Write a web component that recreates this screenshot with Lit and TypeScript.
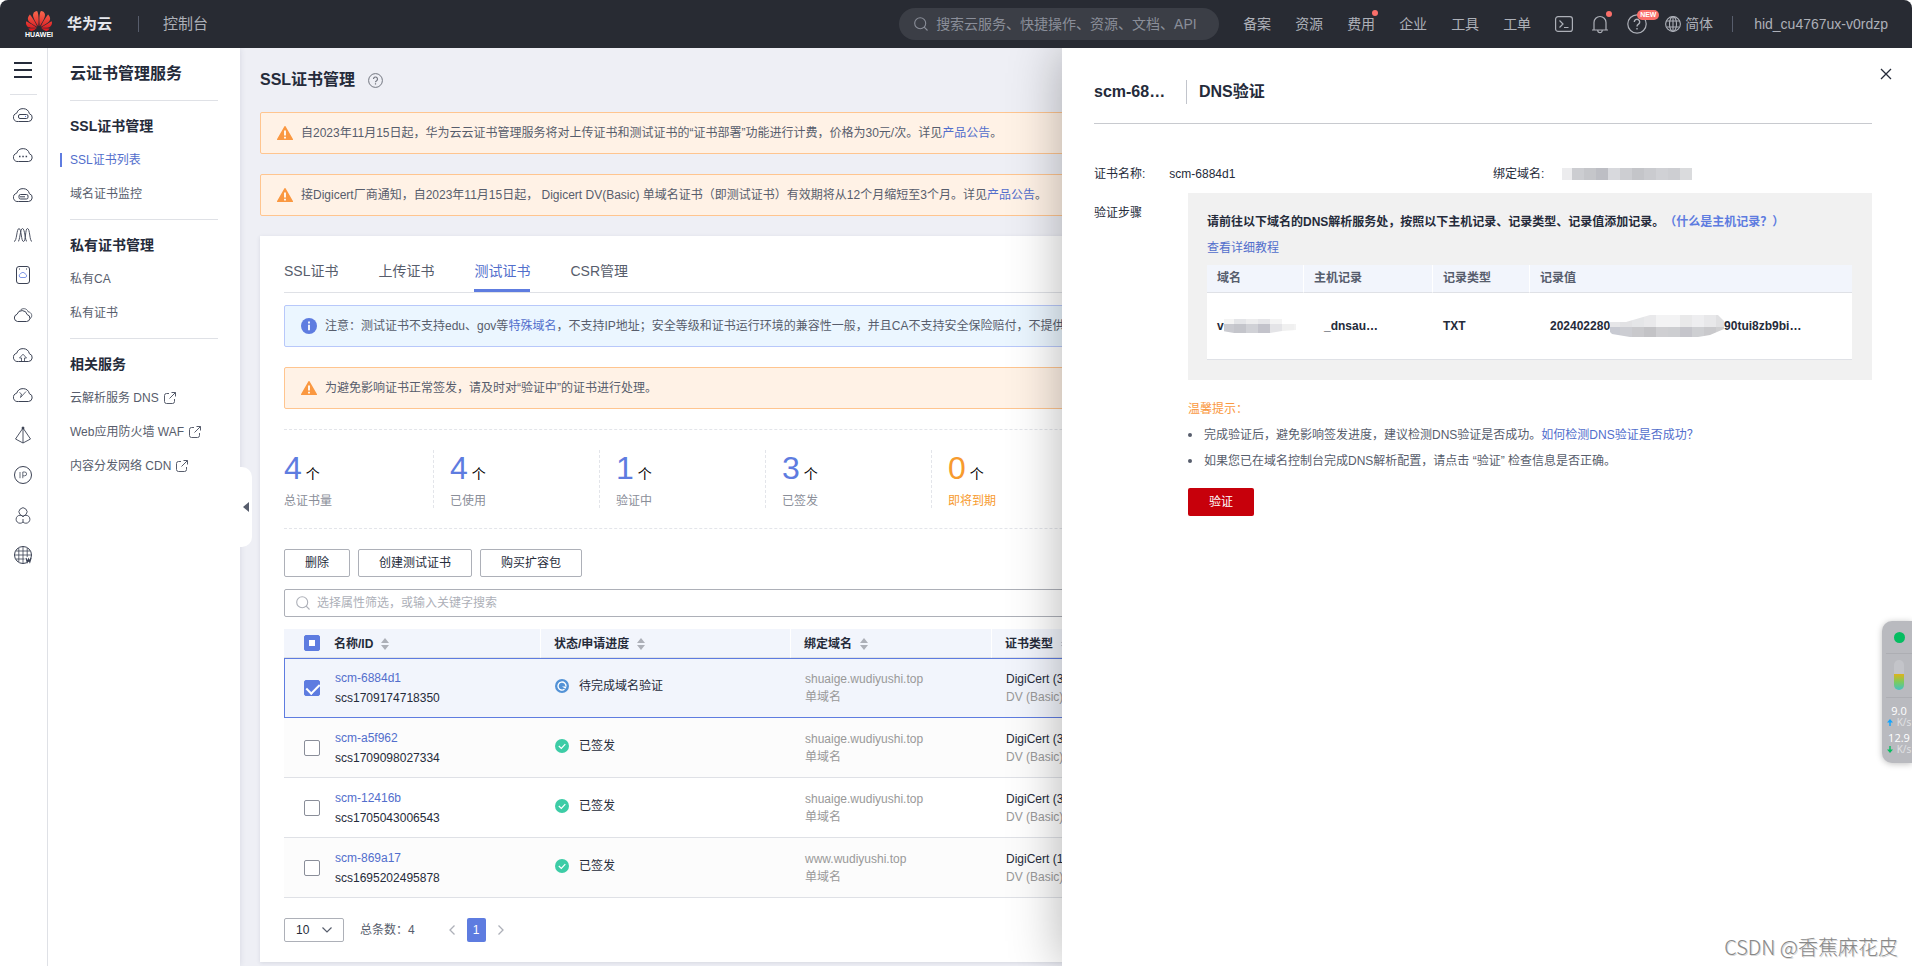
import { LitElement, html, css, svg, TemplateResult, SVGTemplateResult } from "lit";
import { customElement, property, state } from "lit/decorators.js";
import { classMap } from "lit/directives/class-map.js";

const baseStyles = css`
  * { box-sizing: border-box; }
  :host {
    font-family: "Liberation Sans", "Noto Sans CJK SC", sans-serif;
    font-size: 12px;
    line-height: 20px;
    color: #252b3a;
    text-spacing-trim: space-all;
  }
  button, input, select { font: inherit; color: inherit; }
  button { cursor: pointer; margin: 0; }
  a { color: #526ecc; text-decoration: none; }
  svg { display: block; flex: none; }
  h1, h2, h3, p, ul { margin: 0; padding: 0; }
`;

const searchIcon = html`<svg width="14" height="14" viewBox="0 0 14 14" fill="none" stroke="currentColor" stroke-width="1.1">
  <circle cx="6.2" cy="6.2" r="5.5" /><path d="M10.2 10.2 13.5 13.5" />
</svg>`;

const externalIcon = html`<svg width="12" height="12" viewBox="0 0 12 12" fill="none" stroke="#575d6c">
  <path d="M5 1.5H2.5a2 2 0 0 0-2 2v6a2 2 0 0 0 2 2h6a2 2 0 0 0 2-2V7M7.5.5h4v4M11.5.5 5.5 6.5" />
</svg>`;

const cloud = "M5.5 16.5h10a4 4 0 0 0 .9-7.8A6.6 6.6 0 0 0 3.700 8.200a4.200 4.200 0 0 0 1.800 8.300z";

const railIcons: SVGTemplateResult[] = [
  svg`<path d=${cloud} /><rect x="5.500" y="9.500" width="9.500" height="4" rx="1.500" /><path d="M12 11.500h1" stroke="#5e7ce0" />`,
  svg`<path d=${cloud} /><path d="M6 11.500h1.500M9.300 11.500h1.500M12.600 11.500h1.500" stroke-width="1.500" />`,
  svg`<path d=${cloud} /><rect x="6" y="9.500" width="9" height="4.500" rx="1.500" /><path d="M7 11.800h5" />`,
  svg`<path d="M1 16.500C4 16.500 3.500 3.500 6 3.500s2 13 4.500 13S12 3.500 14.500 3.500 16.500 16.500 19 16.500M5 16.500c2 0 2-13 4.500-13s2.500 13 4.500 13" stroke-width=".9" />`,
  svg`<rect x="3.500" y="1.500" width="13" height="17" rx="2.500" /><path d="M8 12.500h4.200a1.700 1.700 0 0 0 .2-3.300 2.700 2.700 0 0 0-5-.2A1.800 1.800 0 0 0 8 12.500z" stroke="#5e7ce0" stroke-width=".8" /><path d="M6 4h1M13 4h1" />`,
  svg`<path d="M4.500 16.500h9a3.500 3.500 0 0 0 .7-6.900A5.300 5.300 0 0 0 4 9.300a3.700 3.700 0 0 0 .5 7.200z" /><path d="M7 5.500c2-2.700 7-2.500 8 1.200 4 .6 5 5 2 7" stroke-width=".8" />`,
  svg`<path d=${cloud} /><path d="M8.500 16.300v-3.300H6.500L10 9.200l3.500 3.800h-2v3.300" stroke-width=".8" />`,
  svg`<path d=${cloud} /><path d="m6.500 7.500 2 1.500-1 3.500L13 6.500" stroke-width=".8" />`,
  svg`<path d="M10 3 2.500 14 10 18l7.500-4L10 3v15" stroke-width=".9" /><circle cx="10" cy="3" r="1" fill="#252b3a" />`,
  svg`<circle cx="10" cy="10" r="8.500" /><path d="M7 7v6.200M9.800 13.200V7h1.900a1.900 1.900 0 0 1 0 3.800H9.800" stroke="#575d6c" stroke-width=".9" />`,
  svg`<path d="M7 9.500a4 4 0 1 1 6 0M10 11.500a4 4 0 1 0 0 5.500 4 4 0 1 0 0-5.500zM7 9.500l3 2 3-2M10 14v3" stroke-width=".9" />`,
  svg`<circle cx="10" cy="10" r="8.500" /><path d="M10 1.500v17M5.800 3v14M14.200 3v9M2.500 6h15M1.500 10h17M2.500 14h9" stroke-width=".8" /><path d="m13 13 1.200 4 1.300-3 1.300 3L18 13" stroke-width="1.200" />`,
];

@customElement("top-bar")
class TopBar extends LitElement {
  static styles = [baseStyles, css`
    :host { display: block; position: relative; z-index: 3; background: #fff; }
    .bar {
      height: 48px; display: flex; align-items: center; padding: 0 24px 0 26px;
      background: #282b33; color: #adb0b8; border-radius: 8px 8px 0 0; font-size: 14px;
    }
    .logo { display: flex; flex-direction: column; align-items: center; width: 26px; color: #fff; }
    .logo-name { font-size: 7px; line-height: 8px; font-weight: 700; }
    .brand { margin-left: 15px; font-size: 15px; font-weight: 700; color: #e6e8ee; }
    .sep { width: 1px; height: 16px; background: #575d6c; flex: none; }
    .brand + .sep { margin: 0 24px 0 26px; }
    .console { font-size: 15px; color: inherit; }
    .search {
      margin-left: auto; width: 320px; height: 32px; border-radius: 16px; background: #3b3e46;
      display: flex; align-items: center; gap: 8px; padding: 0 14px 0 15px; color: #8a8e99;
    }
    .search input { flex: 1; min-width: 0; border: 0; outline: 0; background: none; padding: 0; }
    .search input::placeholder { color: #8a8e99; opacity: 1; }
    nav { display: flex; gap: 24px; margin: 0 24px; }
    .link { position: relative; color: #adb0b8; }
    .dot { position: absolute; top: -4px; right: -3px; width: 6px; height: 6px; border-radius: 3px; background: #fa6f6a; }
    .tools { display: flex; align-items: center; gap: 18px; }
    .tool { position: relative; display: block; border: 0; background: none; padding: 0; color: inherit; }
    .tool .dot { top: -3px; }
    .new {
      position: absolute; left: 10px; top: -4px; height: 10px; padding: 0 3px; border-radius: 5px;
      background: #fa6f6a; color: #fff; font-size: 7px; line-height: 10px; font-weight: 700;
    }
    .lang { display: flex; align-items: center; gap: 4px; border: 0; background: none; padding: 0; }
    .lang + .sep { margin: 0 21px 0 1px; }
    .user { color: inherit; }
  `];

  render() {
    const links = ["备案", "资源", "费用", "企业", "工具", "工单"];
    return html`<header class="bar">
      <div class="logo">
        <svg width="26" height="21" viewBox="0 2 24 19" preserveAspectRatio="none">
          <defs><linearGradient id="petal" x1="0" y1="0" x2="0" y2="1"><stop offset="0" stop-color="#f8684e" /><stop offset="1" stop-color="#d8121c" /></linearGradient></defs>
          <path fill="url(#petal)" d="M3.67 6.14S1.82 7.91 1.72 9.78v.35c.08 1.51 1.22 2.4 1.22 2.4 1.83 1.79 6.26 4.04 7.3 4.55 0 0 .06.03.1-.01l.02-.04v-.04C7.52 10.8 3.67 6.14 3.67 6.14zM9.65 18.6c-.02-.08-.1-.08-.1-.08l-7.38.26c.8 1.43 2.15 2.53 3.56 2.2.96-.25 3.16-1.78 3.88-2.3.06-.05.04-.09.04-.09zm.08-.78C6.49 15.63.21 12.28.21 12.28c-.15.46-.2.9-.21 1.3v.07c0 1.070.4 1.820.4 1.820.8 1.690 2.340 2.200 2.340 2.200.7.3 1.400.31 1.400.31.12.02 4.400 0 5.540 0 .05 0 .08-.05.08-.05v-.06c0-.03-.03-.05-.03-.05zM9.060 3.190a3.420 3.420 0 0 0-2.570 3.150v.41c.03.6.16 1.050.16 1.050.66 2.900 3.860 7.650 4.550 8.650.05.05.1.03.1.03a.1.1 0 0 0 .06-.1c1.060-10.600-1.110-13.420-1.110-13.420-.32.02-1.190.23-1.190.23zm8.299 2.270s-.49-1.800-2.440-2.280c0 0-.57-.14-1.170-.22 0 0-2.180 2.810-1.120 13.430.01.07.06.08.06.08.07.03.1-.03.1-.03.72-1.030 3.900-5.760 4.550-8.640 0 0 .36-1.400.02-2.340zm-2.920 13.070s-.07 0-.09.05c0 0-.01.07.03.1.7.51 2.850 2 3.880 2.300 0 0 .16.05.43.06h.14c.69-.02 1.900-.37 3-2.260l-7.400-.25zm7.830-8.410c.14-2.060-1.940-3.970-1.940-3.980 0 0-3.850 4.660-6.670 10.800 0 0-.03.08.02.13l.04.01h.06c1.060-.53 5.460-2.770 7.280-4.540 0 0 1.150-.93 1.210-2.420zm1.520 2.140s-6.280 3.370-9.520 5.550c0 0-.05.04-.03.11 0 0 .03.06.07.06 1.160 0 5.560 0 5.670-.02 0 0 .57-.02 1.270-.29 0 0 1.560-.5 2.370-2.270 0 0 .73-1.450.17-3.140z" />
        </svg>
        <span class="logo-name">HUAWEI</span>
      </div>
      <span class="brand">华为云</span><span class="sep"></span>
      <a class="console" href="#">控制台</a>
      <label class="search">${searchIcon}<input type="text" aria-label="搜索" placeholder="搜索云服务、快捷操作、资源、文档、API" /></label>
      <nav>${links.map(l => html`<a class="link" href="#">${l}${l === "费用" ? html`<i class="dot"></i>` : ""}</a>`)}</nav>
      <div class="tools">
        <button class="tool" aria-label="CloudShell">
          <svg width="18" height="16" viewBox="0 0 18 16" fill="none" stroke="currentColor" stroke-width="1.2"><rect x=".6" y=".6" width="16.800" height="14.800" rx="2.500" /><path d="m4.500 4.500 3.500 3.500-3.500 3.500M9 11.500h4.500" /></svg>
        </button>
        <button class="tool" aria-label="通知">
          <svg width="18" height="20" viewBox="0 0 18 20" fill="none" stroke="currentColor" stroke-width="1.200"><path d="M1 16h16M3 16V8.500a6 6 0 0 1 12 0V16M6.800 16.500a2.200 2.200 0 0 0 4.400 0" /></svg>
          <i class="dot"></i>
        </button>
        <button class="tool" aria-label="帮助">
          <svg width="20" height="20" viewBox="0 0 20 20" fill="none" stroke="currentColor" stroke-width="1.200"><circle cx="10" cy="10" r="9.200" /><path d="M7.300 8a2.700 2.700 0 1 1 4.200 2.200c-1 .7-1.500 1.200-1.500 2.300M10 14v1.500" stroke-width="1.400" /></svg>
          <span class="new">NEW</span>
        </button>
        <button class="lang">
          <svg width="16" height="16" viewBox="0 0 16 16" fill="none" stroke="currentColor" stroke-width="1.100"><circle cx="8" cy="8" r="7.400" /><ellipse cx="8" cy="8" rx="3.500" ry="7.400" /><path d="M8 .6v14.800M1.500 5h13M1.500 11h13" /></svg>
          简体
        </button>
        <span class="sep"></span>
      </div>
      <a class="user" href="#">hid_cu4767ux-v0rdzp</a>
    </header>`;
  }
}

@customElement("side-nav")
class SideNav extends LitElement {
  static styles = [baseStyles, css`
    :host { display: flex; flex: none; position: relative; z-index: 1; background: #fff; box-shadow: 0 0 6px rgba(40, 50, 80, .12); }
    .rail { width: 48px; border-right: 1px solid #dfe1e6; display: flex; flex-direction: column; align-items: center; padding: 14px 1px 0 0; }
    .rail button { border: 0; background: none; padding: 0; }
    .menu-line { width: 27px; height: 1px; background: #dfe1e6; margin: 16px 0 0; }
    .rail .rail-item { height: 40px; display: flex; align-items: center; }
    .menu { width: 192px; padding: 16px 22px 0; }
    h2 { font-size: 16px; line-height: 20px; padding-bottom: 16px; color: #252b3a; }
    h3 { font-size: 14px; line-height: 20px; margin-bottom: 7px; }
    .group { border-top: 1px solid #dfe1e6; padding: 15px 0 8px; }
    .item { display: flex; align-items: center; gap: 5px; height: 34px; color: #575d6c; white-space: nowrap; }
    .active { color: #526ecc; margin-left: -10px; }
    .active::before { content: ""; width: 2px; height: 14px; background: #5e7ce0; margin-right: 3px; }
    .fold {
      position: absolute; left: 100%; top: 419px; width: 12px; height: 80px; border: 0; padding: 0 0 0 3px;
      background: #fff; border-radius: 0 10px 10px 0;
    }
  `];

  private groups = [
    { title: "SSL证书管理", items: ["SSL证书列表", "域名证书监控"], external: false },
    { title: "私有证书管理", items: ["私有CA", "私有证书"], external: false },
    { title: "相关服务", items: ["云解析服务 DNS", "Web应用防火墙 WAF", "内容分发网络 CDN"], external: true },
  ];

  render() {
    return html`
      <div class="rail">
        <button aria-label="服务列表"><svg width="18" height="16" viewBox="0 0 18 16" stroke="#252b3a" stroke-width="2"><path d="M0 1h18M0 8h18M0 15h18" /></svg></button>
        <span class="menu-line"></span>
        ${railIcons.map((icon, i) => html`<button class="rail-item" aria-label="快捷服务 ${i + 1}">
          <svg width="20" height="20" viewBox="0 0 20 20" fill="none" stroke="#3b4254" stroke-width="1">${icon}</svg>
        </button>`)}
      </div>
      <nav class="menu">
        <h2>云证书管理服务</h2>
        ${this.groups.map(g => html`<section class="group"><h3>${g.title}</h3>
          ${g.items.map(t => html`<a href="#" class=${classMap({ item: true, active: t === "SSL证书列表" })}>${t}${g.external ? externalIcon : ""}</a>`)}
        </section>`)}
      </nav>
      <button class="fold" aria-label="收起"><svg width="6" height="10" viewBox="0 0 6 10"><path d="M6 0v10L0 5z" fill="#575d6c" /></svg></button>
    `;
  }
}

@customElement("notice-bar")
class NoticeBar extends LitElement {
  @property() kind: "warn" | "info" = "warn";
  static styles = [baseStyles, css`
    :host { display: block; }
    .bar { display: flex; align-items: center; gap: 8px; height: 42px; padding: 0 16px; border: 1px solid #ffc58f; border-radius: 2px; background: #fff2e6; color: #575d6c; white-space: nowrap; overflow: hidden; }
    .info { border-color: #b8c8fa; background: #ebf6ff; }
  `];
  render() {
    const warn = html`<svg width="16" height="14" viewBox="0 0 16 14"><path d="M7.300.4a.8.8 0 0 1 1.400 0L15.900 13a.7.7 0 0 1-.6 1H.7a.7.7 0 0 1-.6-1z" fill="#fa9841" /><path d="M8 4.500v5M8 10.800v1.700" stroke="#fff" stroke-width="1.800" /></svg>`;
    const info = html`<svg width="16" height="16" viewBox="0 0 16 16"><circle cx="8" cy="8" r="8" fill="#5e7ce0" /><path d="M8 3.500v2M8 6.700v5.600" stroke="#fff" stroke-width="1.800" /></svg>`;
    return html`<div class=${classMap({ bar: true, info: this.kind === "info" })} role="status">
      ${this.kind === "info" ? info : warn}<span><slot></slot></span></div>`;
  }
}

interface Cert { name: string; id: string; pending: boolean; domain: string; type: string; }

@customElement("cert-list")
class CertList extends LitElement {
  static styles = [baseStyles, css`
    :host { display: block; background: #fff; padding: 25px 24px 20px; box-shadow: 0 1px 4px rgba(40, 50, 80, .12); }
    .tabs { display: flex; gap: 40px; border-bottom: 1px solid #dfe1e6; margin-bottom: 12px; }
    .tab { height: 31px; padding: 0 0 8px; border: 0; border-bottom: 3px solid transparent; background: none; color: #575d6c; font-size: 14px; line-height: 20px; }
    .tab.on { color: #526ecc; border-color: #5e7ce0; }
    notice-bar + notice-bar { margin-top: 20px; }
    .stats { display: flex; margin: 20px 0; height: 100px; padding: 20px 0; border: dashed #e3e5ea; border-width: 1px 0; }
    .stat { width: 150px; margin-right: 16px; border-right: 1px dashed #e3e5ea; color: #8a8e99; }
    .stat:last-child { border: 0; }
    .count { display: flex; align-items: baseline; gap: 4px; height: 41px; line-height: 36px; font-size: 32px; color: #5e7ce0; }
    .unit { font-size: 14px; color: #000; }
    .soon, .soon .count { color: #f79b2e; }
    .soon .unit { color: #000; }
    .actions { display: flex; gap: 8px; margin-bottom: 12px; }
    .action { height: 28px; padding: 0 20px; border: 1px solid #adb0b8; border-radius: 2px; background: #fff; line-height: 20px; }
    .filter { display: flex; align-items: center; gap: 7px; height: 28px; padding: 0 11px; border: 1px solid #adb0b8; border-radius: 2px; color: #adb0b8; margin-bottom: 12px; }
    .filter input { flex: 1; border: 0; outline: 0; padding: 0; background: none; }
    .filter input::placeholder { color: #adb0b8; opacity: 1; }
    table { width: 100%; table-layout: fixed; border-spacing: 0; }
    th { height: 29px; padding: 1px 0 0 13px; text-align: left; background: #f2f5fc; border-bottom: 1px solid #dfe1e6; border-right: 1px solid #fff; font-weight: 700; line-height: 20px; }
    td { height: 60px; padding: 0 0 0 14px; border-bottom: 1px solid #dfe1e6; line-height: 18px; white-space: nowrap; overflow: hidden; }
    th:first-child { padding: 0 0 0 20px; border-right: 0; }
    td:first-child { padding: 0 0 0 20px; }
    th:nth-child(2) { padding-left: 0; }
    td:nth-child(2) { padding-left: 1px; line-height: 20px; }
    .pick { width: 50px; }
    .name { width: 207px; }
    .state { width: 250px; }
    .domain { width: 201px; }
    .head { display: flex; align-items: center; gap: 8px; }
    .even td { background: #fcfcfc; }
    .on td { background: #f2f5fc; border-top: 1px solid #5e7ce0; border-bottom-color: #5e7ce0; }
    .on td:first-child { border-left: 1px solid #5e7ce0; padding-left: 19px; }
    .box { appearance: none; display: block; width: 16px; height: 16px; margin: 0; border: 1px solid #8a8e99; border-radius: 2px; background: #fff; position: relative; }
    .box:checked, .box:indeterminate { background: #5e7ce0; border-color: #5e7ce0; }
    .box:indeterminate::after { content: ""; position: absolute; inset: 4px; background: #fff; }
    .box:checked:not(:indeterminate)::after { content: ""; position: absolute; left: 4px; top: 0; width: 6px; height: 11px; border: solid #fff; border-width: 0 2px 2px 0; transform: rotate(45deg); }
    .status { display: flex; align-items: center; gap: 10px; padding-bottom: 4px; }
    .muted { color: #999; }
    .pager { display: flex; align-items: center; margin-top: 20px; color: #575d6c; }
    .size { position: relative; display: block; margin-right: 16px; color: #252b3a; }
    .size select { appearance: none; width: 60px; height: 24px; padding: 0 0 0 11px; border: 1px solid #adb0b8; border-radius: 2px; background: #fff; }
    .size svg { position: absolute; right: 12px; top: 9px; pointer-events: none; }
    .step { border: 0; background: none; padding: 0; width: 30px; display: flex; justify-content: center; }
    .total { margin-right: 22px; }
    .page { width: 19px; height: 24px; border: 0; border-radius: 2px; padding: 0; background: #5e7ce0; color: #fff; }
  `];

  @state() private selected = new Set(["scm-6884d1"]);

  private certs: Cert[] = [
    { name: "scm-6884d1", id: "scs1709174718350", pending: true, domain: "shuaige.wudiyushi.top", type: "DigiCert (3个月)" },
    { name: "scm-a5f962", id: "scs1709098027334", pending: false, domain: "shuaige.wudiyushi.top", type: "DigiCert (3个月)" },
    { name: "scm-12416b", id: "scs1705043006543", pending: false, domain: "shuaige.wudiyushi.top", type: "DigiCert (3个月)" },
    { name: "scm-869a17", id: "scs1695202495878", pending: false, domain: "www.wudiyushi.top", type: "DigiCert (1年)" },
  ];

  private toggle(name: string) {
    const next = new Set(this.selected);
    next.has(name) ? next.delete(name) : next.add(name);
    this.selected = next;
  }

  private column(name: string): TemplateResult {
    return html`<div class="head">${name}<svg width="8" height="12" viewBox="0 0 8 12" fill="#adb0b8"><path d="M4 0l4 5H0zM4 12l4-5H0z" /></svg></div>`;
  }

  private stateIcon(pending: boolean): TemplateResult {
    return pending
      ? html`<svg width="14" height="14" viewBox="0 0 14 14" fill="none" stroke="#fff" stroke-width="1.400"><circle cx="7" cy="7" r="7" fill="#5392d6" stroke="none" /><path d="M9.500 10.200A4 4 0 1 1 11 7.300" /><path d="M7 7.400h4.600L10.500 9.800z" fill="#fff" stroke="none" /></svg>`
      : html`<svg width="14" height="14" viewBox="0 0 14 14" fill="none" stroke="#fff" stroke-width="1.200"><circle cx="7" cy="7" r="7" fill="#3dcca6" stroke="none" /><path d="m3.800 7 2.500 2.400 4-4.300" /></svg>`;
  }

  render() {
    const stats = [["4", "总证书量"], ["4", "已使用"], ["1", "验证中"], ["3", "已签发"], ["0", "即将到期"]];
    const some = this.selected.size > 0 && this.selected.size < this.certs.length;
    return html`
      <div class="tabs" role="tablist">
        ${["SSL证书", "上传证书", "测试证书", "CSR管理"].map(t => html`<button role="tab" class=${classMap({ tab: true, on: t === "测试证书" })}>${t}</button>`)}
      </div>
      <notice-bar kind="info">注意：测试证书不支持edu、gov等<a href="#">特殊域名</a>，不支持IP地址；安全等级和证书运行环境的兼容性一般，并且CA不支持安全保险赔付，不提供</notice-bar>
      <notice-bar>为避免影响证书正常签发，请及时对“验证中”的证书进行处理。</notice-bar>
      <div class="stats">
        ${stats.map(([n, label]) => html`<div class=${classMap({ stat: true, soon: label === "即将到期" })}>
          <div class="count">${n}<span class="unit">个</span></div>${label}</div>`)}
      </div>
      <div class="actions">${["删除", "创建测试证书", "购买扩容包"].map(t => html`<button class="action">${t}</button>`)}</div>
      <label class="filter">${searchIcon}<input aria-label="筛选" placeholder="选择属性筛选，或输入关键字搜索" /></label>
      <table>
        <thead><tr>
          <th class="pick"><input class="box" type="checkbox" aria-label="全选" .indeterminate=${some} /></th>
          <th class="name">${this.column("名称/ID")}</th>
          <th class="state">${this.column("状态/申请进度")}</th>
          <th class="domain">${this.column("绑定域名")}</th>
          <th>${this.column("证书类型")}</th>
        </tr></thead>
        <tbody>${this.certs.map((c, i) => html`<tr class=${classMap({ on: this.selected.has(c.name), even: i % 2 === 1 })}>
          <td><input class="box" type="checkbox" aria-label=${c.name} .checked=${this.selected.has(c.name)} @change=${() => this.toggle(c.name)} /></td>
          <td><a href="#">${c.name}</a><br />${c.id}</td>
          <td><div class="status">${this.stateIcon(c.pending)}${c.pending ? "待完成域名验证" : "已签发"}</div></td>
          <td class="muted">${c.domain}<br />单域名</td>
          <td>${c.type}<br /><span class="muted">DV (Basic)</span></td>
        </tr>`)}</tbody>
      </table>
      <div class="pager">
        <label class="size"><select aria-label="每页条数"><option>10</option><option>20</option></select>
          <svg width="10" height="6" viewBox="0 0 10 6" fill="none" stroke="#575d6c" stroke-width="1.200"><path d="m.5.5 4.500 4.500L9.500.5" /></svg></label>
        <span class="total">总条数：4</span>
        <button class="step" aria-label="上一页"><svg width="6" height="10" viewBox="0 0 6 10" fill="none" stroke="#adb0b8" stroke-width="1.300"><path d="M5.500.5 1 5l4.500 4.500" /></svg></button>
        <button class="page">1</button>
        <button class="step" aria-label="下一页"><svg width="6" height="10" viewBox="0 0 6 10" fill="none" stroke="#adb0b8" stroke-width="1.300"><path d="M.5.5 5 5 .5 9.500" /></svg></button>
      </div>
    `;
  }
}

@customElement("dns-drawer")
class DnsDrawer extends LitElement {
  static styles = [baseStyles, css`
    :host { display: block; background: #fff; padding: 28px 40px 24px 32px; box-shadow: 0 0 50px rgba(0, 0, 0, .3); }
    .title { display: flex; align-items: center; height: 48px; border-bottom: 1px solid #c8cacf; padding-bottom: 15px; font-size: 16px; font-weight: 700; margin-bottom: 40px; }
    h2 { font-size: 16px; }
    .short { width: 92px; }
    .rule { width: 1px; height: 24px; background: #c2c5cc; margin-right: 12px; }
    .close { position: absolute; top: 20px; right: 20px; border: 0; background: none; padding: 0; }
    .pair { display: grid; grid-template-columns: 1fr 1fr; gap: 20px; margin-bottom: 9px; }
    .field { display: flex; align-items: center; gap: 24px; }
    .field svg { margin-left: -6px; }
    .row { display: grid; grid-template-columns: 94px minmax(0, 1fr); margin-bottom: 18px; }
    .label { padding-top: 10px; }
    .panel { background: #f1f1f1; padding: 18px 20px 20px 19px; margin-bottom: 19px; }
    .lead { font-weight: 700; line-height: 22px; white-space: nowrap; }
    .lead a { color: #5e7ce0; }
    .more { line-height: 26px; margin: 2px 0 4px; }
    table { width: 100%; table-layout: fixed; border-spacing: 0; background: #fff; }
    th { height: 28px; padding: 0 0 2px 10px; text-align: left; background: #f2f5fc; color: #575d6c; font-weight: 700; border-bottom: 1px solid #dfe1e6; border-right: 1px solid #fff; }
    th:last-child { border-right: 0; }
    td { height: 67px; padding: 0 0 0 10px; font-weight: 700; border-bottom: 1px solid #dfe1e6; white-space: nowrap; }
    .c1 { width: 97px; }
    .c2 { width: 129px; }
    .c3 { width: 97px; }
    .inset { padding-left: 20px; }
    .cell { display: flex; align-items: center; }
    .tip { color: #fa9841; line-height: 20px; }
    ul { list-style: none; color: #575d6c; margin: 3px 0 14px; }
    li { line-height: 26px; display: flex; align-items: center; white-space: nowrap; }
    li::before { content: ""; width: 4px; height: 4px; border-radius: 2px; background: #575d6c; margin-right: 12px; }
    .verify { height: 28px; padding: 0 21px; border: 0; border-radius: 2px; background: #c7000b; color: #fff; }
  `];

  private mosaic(shades: string[], y: number, h: number, size = 12) {
    return shades.map((c, i) => svg`<rect x=${i * size} y=${y} width=${size} height=${h} fill=${c} />`);
  }

  render() {
    return html`
      <button class="close" aria-label="关闭"><svg width="12" height="12" viewBox="0 0 12 12" stroke="#252b3a" stroke-width="1.300"><path d="m1 1 10 10M11 1 1 11" /></svg></button>
      <header class="title"><span class="short">scm-68…</span><span class="rule"></span><h2>DNS验证</h2></header>
      <div class="pair">
        <div class="field"><span>证书名称:</span><span>scm-6884d1</span></div>
        <div class="field"><span>绑定域名:</span>
          <svg width="130" height="12" viewBox="-10 0 130 12"><rect x="-10" width="10" height="12" fill="#ececee" />
            ${this.mosaic(["#cccdd1", "#c5c6ca", "#bdbec4", "#d8d9dd", "#cdced2", "#c4c5c9", "#cacbcf", "#d0d1d5", "#cdced2", "#dadbdd"], 0, 12)}</svg>
        </div>
      </div>
      <div class="row">
        <span class="label">验证步骤</span>
        <div>
          <div class="panel">
            <p class="lead">请前往以下域名的DNS解析服务处，按照以下主机记录、记录类型、记录值添加记录。<a href="#">（什么是主机记录？）</a></p>
            <p class="more"><a href="#">查看详细教程</a></p>
            <table>
              <thead><tr><th class="c1">域名</th><th class="c2">主机记录</th><th class="c3">记录类型</th><th>记录值</th></tr></thead>
              <tbody><tr>
                <td><div class="cell">v<svg width="72" height="16" viewBox="2 0 72 16">
                  <clipPath id="smudge-a"><path d="M0 1h60l6 5h8v6l-14 1-12 2H12L0 13z" /></clipPath>
                  <g clip-path="url(#smudge-a)">${this.mosaic(["#f4f4f4", "#e4e5e8", "#ededee", "#e6e6e9", "#f4f4f4", "#fff", "#fff"], 1, 5)}${this.mosaic(["#c9cad0", "#c4c5cb", "#d0d1d6", "#c3c3cb", "#e4e4e7", "#f0f0f0", "#f3f3f3"], 6, 9)}</g>
                </svg></div></td>
                <td class="inset">_dnsau…</td>
                <td>TXT</td>
                <td class="inset"><div class="cell">202402280<svg width="114" height="28" viewBox="2 0 114 28">
                  <clipPath id="smudge-b"><path d="M2 10h16L42 3h68l6 6v8l-14 6-12 2H22L4 22 0 18z" /></clipPath>
                  <g clip-path="url(#smudge-b)">${this.mosaic(["#e6e6e8", "#e2e2e4", "#e5e6e8", "#e9e9eb", "#f3f3f4", "#f3f3f4", "#e9e9ea", "#eeeef0", "#e8e8ea", "#e0e0e2"], 3, 12)}${this.mosaic(["#c8cad2", "#cccdd2", "#c9c9cc", "#c3c3c6", "#cfcfd2", "#cdced1", "#c5c5cb", "#cecfd2", "#c9c9cc", "#cfcfd1"], 15, 10)}</g>
                </svg>90tui8zb9bi…</div></td>
              </tr></tbody>
            </table>
          </div>
          <p class="tip">温馨提示：</p>
          <ul>
            <li><span>完成验证后，避免影响签发进度，建议检测DNS验证是否成功。<a href="#">如何检测DNS验证是否成功？</a></span></li>
            <li><span>如果您已在域名控制台完成DNS解析配置，请点击 “验证” 检查信息是否正确。</span></li>
          </ul>
          <button class="verify">验证</button>
        </div>
      </div>
    `;
  }
}

@customElement("net-meter")
class NetMeter extends LitElement {
  static styles = [baseStyles, css`
    :host { display: flex; flex-direction: column; align-items: center; width: 30px; height: 142px; padding: 11px 0 0 4px; background: #b9babf; border-radius: 10px 0 0 10px; box-shadow: 0 1px 6px rgba(0, 0, 0, .25); color: #fff; font-family: "Open Sans", sans-serif; font-size: 11px; line-height: 12px; }
    .light { width: 11px; height: 11px; border-radius: 6px; background: #05bd61; margin-bottom: 10px; }
    .line { align-self: stretch; height: 1px; background: #adaeb3; }
    .tube { width: 10px; height: 30px; border-radius: 5px; margin: 6px 0 7px; background: linear-gradient(#c3c4c9 14px, #deb31a 14px, #7bcb5f 22px, #45c1c4); }
    .value { margin-top: 7px; }
    .value + .rate + .value { margin-top: 5px; }
    .rate { display: flex; align-items: center; gap: 4px; font-size: 10px; line-height: 10px; color: #e2e3e6; }
  `];
  render() {
    return html`
      <span class="light"></span><span class="line"></span><span class="tube"></span><span class="line"></span>
      <span class="value">9.0</span>
      <span class="rate"><svg width="6" height="7" viewBox="0 0 6 7"><path d="M3 0 6 3.500H3.700V7H2.300V3.500H0z" fill="#12a5ff" /></svg>K/s</span>
      <span class="value">12.9</span>
      <span class="rate"><svg width="6" height="7" viewBox="0 0 6 7"><path d="M3 7 0 3.500h2.300V0h1.400v3.500H6z" fill="#05bd61" /></svg>K/s</span>
    `;
  }
}

@customElement("app-root")
class AppRoot extends LitElement {
  static styles = [baseStyles, css`
    :host { display: flex; flex-direction: column; position: relative; height: 100vh; overflow: hidden; background: #eeeff5; }
    .body { display: flex; flex: 1; min-height: 0; }
    main { flex: 1; min-width: 0; padding: 22px 20px 0; }
    .heading { display: flex; align-items: center; gap: 13px; height: 20px; margin-bottom: 22px; }
    h1 { font-size: 16px; line-height: 20px; }
    .notice { margin-bottom: 20px; }
    .drawer { position: absolute; z-index: 2; top: 48px; right: 0; bottom: 0; width: 850px; max-width: 100%; }
    .meter { position: absolute; z-index: 4; right: 0; top: 621px; }
    .mark { position: absolute; z-index: 4; right: 14px; bottom: 7px; font-family: "Noto Sans CJK SC", sans-serif; font-weight: 300; font-size: 20px; line-height: 24px; color: #888; text-shadow: 1px 1px 0 #d8d8d8; }
  `];

  render() {
    return html`
      <top-bar></top-bar>
      <div class="body">
        <side-nav></side-nav>
        <main>
          <div class="heading"><h1>SSL证书管理</h1>
            <svg width="15" height="15" viewBox="0 0 15 15" fill="none" stroke="#71757f"><circle cx="7.500" cy="7.500" r="6.900" /><path d="M5.500 6a2 2 0 1 1 3.100 1.700c-.8.5-1.100.8-1.100 1.600M7.500 10.200v1.200" stroke-width="1.200" /></svg>
          </div>
          <notice-bar class="notice">自2023年11月15日起，华为云云证书管理服务将对上传证书和测试证书的“证书部署”功能进行计费，价格为30元/次。详见<a href="#">产品公告</a>。</notice-bar>
          <notice-bar class="notice">接Digicert厂商通知，自2023年11月15日起， Digicert DV(Basic) 单域名证书（即测试证书）有效期将从12个月缩短至3个月。详见<a href="#">产品公告</a>。</notice-bar>
          <cert-list></cert-list>
        </main>
      </div>
      <dns-drawer class="drawer"></dns-drawer>
      <net-meter class="meter"></net-meter>
      <div class="mark">CSDN @香蕉麻花皮</div>
    `;
  }
}
